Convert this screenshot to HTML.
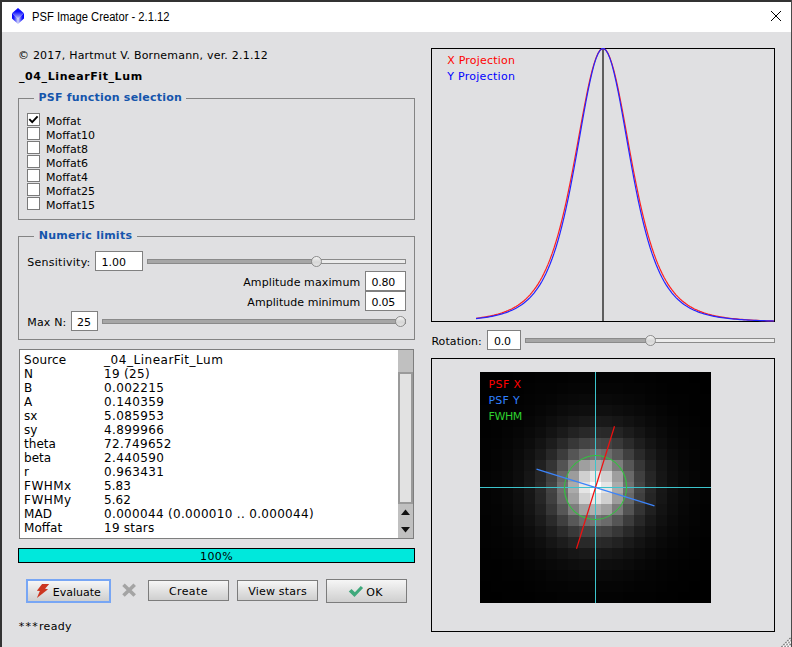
<!DOCTYPE html>
<html><head><meta charset="utf-8"><title>PSF Image Creator - 2.1.12</title>
<style>
html,body{margin:0;padding:0;}
body{width:792px;height:647px;overflow:hidden;background:#e0e0e2;position:relative;font-family:'DejaVu Sans','Liberation Sans',sans-serif;font-size:11px;color:#000;}
.b{position:absolute;display:block;}
.t{position:absolute;white-space:pre;}
</style></head><body>
<div class="b" style="left:0px;top:0px;width:792px;height:32px;background:#fff;"></div>
<div class="b" style="left:0px;top:0px;width:792px;height:2px;background:#333;"></div>
<div class="b" style="left:0px;top:0px;width:2px;height:647px;background:#333;"></div>
<div class="b" style="left:791px;top:0px;width:1px;height:647px;background:#4a4a4a;"></div>
<svg class="b" style="left:779px;top:635px" width="12" height="12" viewBox="0 0 12 12"><path d="M2.5,12 L12,2.5 M5.5,12 L12,5.5 M8.5,12 L12,8.5" stroke="#6a6a6a" stroke-width="1.3" stroke-dasharray="1.6 1.2" fill="none"/><path d="M4,12 L12,4 M7,12 L12,7 M10,12 L12,10" stroke="#fff" stroke-width="1.2" stroke-dasharray="1.6 1.2" fill="none"/></svg>
<svg class="b" style="left:10px;top:6px" width="16" height="20" viewBox="10 6 16 20">
<defs>
<linearGradient id="gt" x1="0" y1="0" x2="0" y2="1"><stop offset="0" stop-color="#0000ff"/><stop offset="0.35" stop-color="#1010ff"/><stop offset="1" stop-color="#b8bef8"/></linearGradient>
<linearGradient id="gl" x1="0" y1="0" x2="1" y2="0"><stop offset="0" stop-color="#0000ff"/><stop offset="0.3" stop-color="#1818ff"/><stop offset="1" stop-color="#d4d8f6"/></linearGradient>
<linearGradient id="gr" x1="1" y1="0" x2="0" y2="0"><stop offset="0" stop-color="#0000ff"/><stop offset="0.3" stop-color="#1818ff"/><stop offset="1" stop-color="#d4d8f6"/></linearGradient>
</defs>
<polygon points="18,8 24,13.3 18,18.6 12,13.3" fill="url(#gt)"/>
<polygon points="12,13.3 18,18.6 18,24 12,18.6" fill="url(#gl)"/>
<polygon points="24,13.3 18,18.6 18,24 24,18.6" fill="url(#gr)"/>
</svg>
<svg class="b" style="left:768px;top:8px" width="16" height="16" viewBox="768 8 16 16"><path d="M771,11 L781,21 M781,11 L771,21" stroke="#000" stroke-width="1.0" fill="none"/></svg>
<div class="b" style="left:18px;top:98px;width:397px;height:122px;border:1px solid #848484;box-sizing:border-box;"></div>
<div class="b" style="left:34px;top:92px;width:152px;height:12px;background:#e0e0e2;"></div>
<div class="b" style="left:18px;top:236px;width:397px;height:104px;border:1px solid #848484;box-sizing:border-box;"></div>
<div class="b" style="left:34px;top:230px;width:103px;height:12px;background:#e0e0e2;"></div>
<div class="b" style="left:27px;top:113px;width:13px;height:13px;border:1px solid #7a7a7a;background:#fff;box-sizing:border-box;"></div>
<div class="b" style="left:27px;top:127px;width:13px;height:13px;border:1px solid #7a7a7a;background:#fff;box-sizing:border-box;"></div>
<div class="b" style="left:27px;top:141px;width:13px;height:13px;border:1px solid #7a7a7a;background:#fff;box-sizing:border-box;"></div>
<div class="b" style="left:27px;top:155px;width:13px;height:13px;border:1px solid #7a7a7a;background:#fff;box-sizing:border-box;"></div>
<div class="b" style="left:27px;top:169px;width:13px;height:13px;border:1px solid #7a7a7a;background:#fff;box-sizing:border-box;"></div>
<div class="b" style="left:27px;top:183px;width:13px;height:13px;border:1px solid #7a7a7a;background:#fff;box-sizing:border-box;"></div>
<div class="b" style="left:27px;top:197px;width:13px;height:13px;border:1px solid #7a7a7a;background:#fff;box-sizing:border-box;"></div>
<svg class="b" style="left:27px;top:113px" width="13" height="13" viewBox="0 0 13 13"><path d="M2.3,6.2 L5.2,9.2 L10.6,3.4" stroke="#000" stroke-width="1.9" fill="none"/></svg>
<div class="b" style="left:95px;top:251px;width:48px;height:20px;border:1px solid #808080;background:#fff;box-sizing:border-box;"></div>
<div class="b" style="left:365px;top:271px;width:41px;height:20px;border:1px solid #808080;background:#fff;box-sizing:border-box;"></div>
<div class="b" style="left:365px;top:291px;width:41px;height:20px;border:1px solid #808080;background:#fff;box-sizing:border-box;"></div>
<div class="b" style="left:71px;top:311px;width:27px;height:20px;border:1px solid #808080;background:#fff;box-sizing:border-box;"></div>
<div class="b" style="left:487px;top:330px;width:34px;height:20px;border:1px solid #808080;background:#fff;box-sizing:border-box;"></div>
<div class="b" style="left:147px;top:259.0px;width:259px;height:5px;border:1px solid #8a8a8a;background:#ececec;box-sizing:border-box;"></div><div class="b" style="left:147px;top:259.0px;width:169.5px;height:5px;border:1px solid #8a8a8a;background:#a6a6a6;box-sizing:border-box;"></div><div class="b" style="left:311.0px;top:256.0px;width:11px;height:11px;border-radius:50%;border:1px solid #8c8c8c;box-sizing:border-box;background:linear-gradient(#f4f4f4,#d6d6d6 55%,#e4e4e4);"></div>
<div class="b" style="left:102px;top:319.0px;width:304px;height:5px;border:1px solid #8a8a8a;background:#ececec;box-sizing:border-box;"></div><div class="b" style="left:102px;top:319.0px;width:298.5px;height:5px;border:1px solid #8a8a8a;background:#a6a6a6;box-sizing:border-box;"></div><div class="b" style="left:395.0px;top:316.0px;width:11px;height:11px;border-radius:50%;border:1px solid #8c8c8c;box-sizing:border-box;background:linear-gradient(#f4f4f4,#d6d6d6 55%,#e4e4e4);"></div>
<div class="b" style="left:525px;top:338.0px;width:250px;height:5px;border:1px solid #8a8a8a;background:#ececec;box-sizing:border-box;"></div><div class="b" style="left:525px;top:338.0px;width:125.5px;height:5px;border:1px solid #8a8a8a;background:#a6a6a6;box-sizing:border-box;"></div><div class="b" style="left:645.0px;top:335.0px;width:11px;height:11px;border-radius:50%;border:1px solid #8c8c8c;box-sizing:border-box;background:linear-gradient(#f4f4f4,#d6d6d6 55%,#e4e4e4);"></div>
<div class="b" style="left:19px;top:349px;width:395px;height:190px;border:1px solid #7e7e7e;background:#fff;box-sizing:border-box;"></div>
<div class="b" style="left:398px;top:350px;width:15px;height:188px;background:#c0c0c0;"></div>
<div class="b" style="left:398px;top:372px;width:15px;height:132px;border:2px solid #9a9a9a;background:#e2e2e2;box-sizing:border-box;"></div>
<svg class="b" style="left:398px;top:504px" width="15" height="34" viewBox="0 0 15 34"><polygon points="3,11 7.5,5.5 12,11" fill="#111"/><polygon points="3,23 7.5,28.5 12,23" fill="#111"/></svg>
<div class="b" style="left:18px;top:548px;width:397px;height:15px;border:1px solid #000;background:#00e8dc;box-sizing:border-box;"></div>
<div class="b" style="left:26px;top:579px;width:85px;height:24px;border:2px solid #78a6f4;box-sizing:border-box;background:linear-gradient(#f6f6f6,#e4e4e4 45%,#cfcfcf);"></div>
<div class="b" style="left:148px;top:580px;width:81px;height:21px;border:1px solid #7c7c7c;box-sizing:border-box;background:linear-gradient(#f6f6f6,#e4e4e4 45%,#cfcfcf);"></div>
<div class="b" style="left:237px;top:580px;width:81px;height:21px;border:1px solid #7c7c7c;box-sizing:border-box;background:linear-gradient(#f6f6f6,#e4e4e4 45%,#cfcfcf);"></div>
<div class="b" style="left:326px;top:579px;width:81px;height:24px;border:1px solid #7c7c7c;box-sizing:border-box;background:linear-gradient(#f6f6f6,#e4e4e4 45%,#cfcfcf);"></div>
<svg class="b" style="left:35px;top:582px" width="17" height="18" viewBox="35 582 17 18"><polygon points="42.05,584 49.2,584 45.06,588.85 48.07,589.25 36.9,598.1 39.84,591.05 36.9,590.8" fill="#cc3620"/></svg>
<svg class="b" style="left:120px;top:582px" width="18" height="18" viewBox="120 582 18 18"><path d="M123.5,584.7 L134.7,595.5 M134.7,584.7 L123.5,595.5" stroke="#a4a4a4" stroke-width="3.6" fill="none"/></svg>
<svg class="b" style="left:347px;top:583px" width="18" height="16" viewBox="347 583 18 16"><polygon points="348.8,591.4 351.5,588.9 354.9,592.2 360.8,585.9 363.1,588.1 354.5,596.9" fill="#3fa97c"/></svg>
<svg class="b" style="left:431px;top:48px" width="345" height="274" viewBox="431 48 345 274">
<rect x="431.5" y="48.5" width="343" height="273" fill="none" stroke="#000" stroke-width="1"/>
<path d="M603,49 V321" stroke="#5e5e5e" stroke-width="2" fill="none"/>
<path d="M476.0,318.27 L478.0,318.02 L480.0,317.75 L482.0,317.46 L484.0,317.14 L486.0,316.80 L488.0,316.43 L490.0,316.03 L492.0,315.60 L494.0,315.14 L496.0,314.63 L498.0,314.09 L500.0,313.49 L502.0,312.85 L504.0,312.15 L506.0,311.39 L508.0,310.57 L510.0,309.67 L512.0,308.69 L514.0,307.63 L516.0,306.47 L518.0,305.20 L520.0,303.83 L522.0,302.32 L524.0,300.68 L526.0,298.89 L528.0,296.93 L530.0,294.80 L532.0,292.47 L534.0,289.92 L536.0,287.14 L538.0,284.11 L540.0,280.81 L542.0,277.21 L544.0,273.28 L546.0,269.02 L548.0,264.38 L550.0,259.35 L552.0,253.90 L554.0,248.01 L556.0,241.66 L558.0,234.83 L560.0,227.50 L562.0,219.67 L564.0,211.34 L566.0,202.51 L568.0,193.20 L570.0,183.44 L572.0,173.27 L574.0,162.76 L576.0,151.99 L578.0,141.03 L580.0,130.02 L582.0,119.08 L584.0,108.35 L586.0,98.00 L588.0,88.20 L590.0,79.12 L592.0,70.94 L594.0,63.82 L596.0,57.91 L598.0,53.36 L600.0,50.26 L602.0,48.70 L604.0,48.70 L606.0,50.26 L608.0,53.36 L610.0,57.91 L612.0,63.82 L614.0,70.94 L616.0,79.12 L618.0,88.20 L620.0,98.00 L622.0,108.35 L624.0,119.08 L626.0,130.02 L628.0,141.03 L630.0,151.99 L632.0,162.76 L634.0,173.27 L636.0,183.44 L638.0,193.20 L640.0,202.51 L642.0,211.34 L644.0,219.67 L646.0,227.50 L648.0,234.83 L650.0,241.66 L652.0,248.01 L654.0,253.90 L656.0,259.35 L658.0,264.38 L660.0,269.02 L662.0,273.28 L664.0,277.21 L666.0,280.81 L668.0,284.11 L670.0,287.14 L672.0,289.92 L674.0,292.47 L676.0,294.80 L678.0,296.93 L680.0,298.89 L682.0,300.68 L684.0,302.32 L686.0,303.83 L688.0,305.20 L690.0,306.47 L692.0,307.63 L694.0,308.69 L696.0,309.67 L698.0,310.57 L700.0,311.39 L702.0,312.15 L704.0,312.85 L706.0,313.49 L708.0,314.09 L710.0,314.63 L712.0,315.14 L714.0,315.60 L716.0,316.03 L718.0,316.43 L720.0,316.80 L722.0,317.14 L724.0,317.46 L726.0,317.75 L728.0,318.02 L730.0,318.27 L732.0,318.50 L734.0,318.72 L736.0,318.92 L738.0,319.11 L740.0,319.29 L742.0,319.45 L744.0,319.60 L746.0,319.75 L748.0,319.88 L750.0,320.00 L752.0,320.12 L754.0,320.23 L756.0,320.33 L758.0,320.42 L760.0,320.51 L762.0,320.60 L764.0,320.67 L766.0,320.75 L768.0,320.82 L770.0,320.88 L772.0,320.94 L774.0,321.00" stroke="#ff2020" stroke-width="1.2" fill="none"/>
<path d="M476.0,318.64 L478.0,318.42 L480.0,318.19 L482.0,317.93 L484.0,317.66 L486.0,317.36 L488.0,317.04 L490.0,316.69 L492.0,316.31 L494.0,315.90 L496.0,315.46 L498.0,314.97 L500.0,314.45 L502.0,313.88 L504.0,313.26 L506.0,312.58 L508.0,311.85 L510.0,311.05 L512.0,310.17 L514.0,309.22 L516.0,308.18 L518.0,307.04 L520.0,305.79 L522.0,304.43 L524.0,302.94 L526.0,301.30 L528.0,299.51 L530.0,297.56 L532.0,295.41 L534.0,293.06 L536.0,290.49 L538.0,287.67 L540.0,284.58 L542.0,281.21 L544.0,277.52 L546.0,273.48 L548.0,269.08 L550.0,264.28 L552.0,259.05 L554.0,253.38 L556.0,247.23 L558.0,240.58 L560.0,233.41 L562.0,225.70 L564.0,217.45 L566.0,208.66 L568.0,199.34 L570.0,189.51 L572.0,179.22 L574.0,168.51 L576.0,157.47 L578.0,146.19 L580.0,134.78 L582.0,123.38 L584.0,112.15 L586.0,101.26 L588.0,90.90 L590.0,81.26 L592.0,72.55 L594.0,64.94 L596.0,58.62 L598.0,53.73 L600.0,50.40 L602.0,48.71 L604.0,48.71 L606.0,50.40 L608.0,53.73 L610.0,58.62 L612.0,64.94 L614.0,72.55 L616.0,81.26 L618.0,90.90 L620.0,101.26 L622.0,112.15 L624.0,123.38 L626.0,134.78 L628.0,146.19 L630.0,157.47 L632.0,168.51 L634.0,179.22 L636.0,189.51 L638.0,199.34 L640.0,208.66 L642.0,217.45 L644.0,225.70 L646.0,233.41 L648.0,240.58 L650.0,247.23 L652.0,253.38 L654.0,259.05 L656.0,264.28 L658.0,269.08 L660.0,273.48 L662.0,277.52 L664.0,281.21 L666.0,284.58 L668.0,287.67 L670.0,290.49 L672.0,293.06 L674.0,295.41 L676.0,297.56 L678.0,299.51 L680.0,301.30 L682.0,302.94 L684.0,304.43 L686.0,305.79 L688.0,307.04 L690.0,308.18 L692.0,309.22 L694.0,310.17 L696.0,311.05 L698.0,311.85 L700.0,312.58 L702.0,313.26 L704.0,313.88 L706.0,314.45 L708.0,314.97 L710.0,315.46 L712.0,315.90 L714.0,316.31 L716.0,316.69 L718.0,317.04 L720.0,317.36 L722.0,317.66 L724.0,317.93 L726.0,318.19 L728.0,318.42 L730.0,318.64 L732.0,318.85 L734.0,319.04 L736.0,319.21 L738.0,319.37 L740.0,319.53 L742.0,319.67 L744.0,319.80 L746.0,319.92 L748.0,320.04 L750.0,320.14 L752.0,320.24 L754.0,320.34 L756.0,320.42 L758.0,320.51 L760.0,320.58 L762.0,320.65 L764.0,320.72 L766.0,320.78 L768.0,320.84 L770.0,320.90 L772.0,320.95 L774.0,321.00" stroke="#2424ff" stroke-width="1.2" fill="none"/>
</svg>
<svg class="b" style="left:431px;top:358px" width="345" height="274" viewBox="431 358 345 274">
<rect x="431.5" y="358.5" width="343" height="273" fill="none" stroke="#000" stroke-width="1"/>
<rect x="480" y="372" width="231" height="231" fill="#000"/>
<g shape-rendering="crispEdges"><rect x="513" y="372" width="11" height="11" fill="#010101"/><rect x="524" y="372" width="11" height="11" fill="#010101"/><rect x="535" y="372" width="11" height="11" fill="#020202"/><rect x="546" y="372" width="11" height="11" fill="#020202"/><rect x="557" y="372" width="11" height="11" fill="#020202"/><rect x="568" y="372" width="11" height="11" fill="#030303"/><rect x="579" y="372" width="11" height="11" fill="#030303"/><rect x="590" y="372" width="11" height="11" fill="#030303"/><rect x="601" y="372" width="11" height="11" fill="#030303"/><rect x="612" y="372" width="11" height="11" fill="#030303"/><rect x="623" y="372" width="11" height="11" fill="#030303"/><rect x="634" y="372" width="11" height="11" fill="#020202"/><rect x="645" y="372" width="11" height="11" fill="#020202"/><rect x="656" y="372" width="11" height="11" fill="#010101"/><rect x="667" y="372" width="11" height="11" fill="#010101"/><rect x="678" y="372" width="11" height="11" fill="#010101"/><rect x="502" y="383" width="11" height="11" fill="#010101"/><rect x="513" y="383" width="11" height="11" fill="#010101"/><rect x="524" y="383" width="11" height="11" fill="#020202"/><rect x="535" y="383" width="11" height="11" fill="#030303"/><rect x="546" y="383" width="11" height="11" fill="#030303"/><rect x="557" y="383" width="11" height="11" fill="#040404"/><rect x="568" y="383" width="11" height="11" fill="#050505"/><rect x="579" y="383" width="11" height="11" fill="#050505"/><rect x="590" y="383" width="11" height="11" fill="#050505"/><rect x="601" y="383" width="11" height="11" fill="#050505"/><rect x="612" y="383" width="11" height="11" fill="#050505"/><rect x="623" y="383" width="11" height="11" fill="#040404"/><rect x="634" y="383" width="11" height="11" fill="#040404"/><rect x="645" y="383" width="11" height="11" fill="#030303"/><rect x="656" y="383" width="11" height="11" fill="#020202"/><rect x="667" y="383" width="11" height="11" fill="#010101"/><rect x="678" y="383" width="11" height="11" fill="#010101"/><rect x="689" y="383" width="11" height="11" fill="#010101"/><rect x="491" y="394" width="11" height="11" fill="#010101"/><rect x="502" y="394" width="11" height="11" fill="#010101"/><rect x="513" y="394" width="11" height="11" fill="#020202"/><rect x="524" y="394" width="11" height="11" fill="#030303"/><rect x="535" y="394" width="11" height="11" fill="#040404"/><rect x="546" y="394" width="11" height="11" fill="#050505"/><rect x="557" y="394" width="11" height="11" fill="#070707"/><rect x="568" y="394" width="11" height="11" fill="#080808"/><rect x="579" y="394" width="11" height="11" fill="#090909"/><rect x="590" y="394" width="11" height="11" fill="#090909"/><rect x="601" y="394" width="11" height="11" fill="#090909"/><rect x="612" y="394" width="11" height="11" fill="#080808"/><rect x="623" y="394" width="11" height="11" fill="#070707"/><rect x="634" y="394" width="11" height="11" fill="#060606"/><rect x="645" y="394" width="11" height="11" fill="#040404"/><rect x="656" y="394" width="11" height="11" fill="#030303"/><rect x="667" y="394" width="11" height="11" fill="#020202"/><rect x="678" y="394" width="11" height="11" fill="#020202"/><rect x="689" y="394" width="11" height="11" fill="#010101"/><rect x="700" y="394" width="11" height="11" fill="#010101"/><rect x="480" y="405" width="11" height="11" fill="#010101"/><rect x="491" y="405" width="11" height="11" fill="#010101"/><rect x="502" y="405" width="11" height="11" fill="#020202"/><rect x="513" y="405" width="11" height="11" fill="#030303"/><rect x="524" y="405" width="11" height="11" fill="#040404"/><rect x="535" y="405" width="11" height="11" fill="#060606"/><rect x="546" y="405" width="11" height="11" fill="#080808"/><rect x="557" y="405" width="11" height="11" fill="#0b0b0b"/><rect x="568" y="405" width="11" height="11" fill="#0d0d0d"/><rect x="579" y="405" width="11" height="11" fill="#0e0e0e"/><rect x="590" y="405" width="11" height="11" fill="#0f0f0f"/><rect x="601" y="405" width="11" height="11" fill="#0f0f0f"/><rect x="612" y="405" width="11" height="11" fill="#0d0d0d"/><rect x="623" y="405" width="11" height="11" fill="#0b0b0b"/><rect x="634" y="405" width="11" height="11" fill="#090909"/><rect x="645" y="405" width="11" height="11" fill="#070707"/><rect x="656" y="405" width="11" height="11" fill="#050505"/><rect x="667" y="405" width="11" height="11" fill="#030303"/><rect x="678" y="405" width="11" height="11" fill="#020202"/><rect x="689" y="405" width="11" height="11" fill="#010101"/><rect x="700" y="405" width="11" height="11" fill="#010101"/><rect x="480" y="416" width="11" height="11" fill="#010101"/><rect x="491" y="416" width="11" height="11" fill="#020202"/><rect x="502" y="416" width="11" height="11" fill="#030303"/><rect x="513" y="416" width="11" height="11" fill="#040404"/><rect x="524" y="416" width="11" height="11" fill="#060606"/><rect x="535" y="416" width="11" height="11" fill="#090909"/><rect x="546" y="416" width="11" height="11" fill="#0d0d0d"/><rect x="557" y="416" width="11" height="11" fill="#111111"/><rect x="568" y="416" width="11" height="11" fill="#151515"/><rect x="579" y="416" width="11" height="11" fill="#181818"/><rect x="590" y="416" width="11" height="11" fill="#1a1a1a"/><rect x="601" y="416" width="11" height="11" fill="#191919"/><rect x="612" y="416" width="11" height="11" fill="#161616"/><rect x="623" y="416" width="11" height="11" fill="#121212"/><rect x="634" y="416" width="11" height="11" fill="#0e0e0e"/><rect x="645" y="416" width="11" height="11" fill="#0a0a0a"/><rect x="656" y="416" width="11" height="11" fill="#070707"/><rect x="667" y="416" width="11" height="11" fill="#050505"/><rect x="678" y="416" width="11" height="11" fill="#030303"/><rect x="689" y="416" width="11" height="11" fill="#020202"/><rect x="700" y="416" width="11" height="11" fill="#010101"/><rect x="480" y="427" width="11" height="11" fill="#010101"/><rect x="491" y="427" width="11" height="11" fill="#020202"/><rect x="502" y="427" width="11" height="11" fill="#040404"/><rect x="513" y="427" width="11" height="11" fill="#060606"/><rect x="524" y="427" width="11" height="11" fill="#090909"/><rect x="535" y="427" width="11" height="11" fill="#0d0d0d"/><rect x="546" y="427" width="11" height="11" fill="#131313"/><rect x="557" y="427" width="11" height="11" fill="#1a1a1a"/><rect x="568" y="427" width="11" height="11" fill="#222222"/><rect x="579" y="427" width="11" height="11" fill="#282828"/><rect x="590" y="427" width="11" height="11" fill="#2b2b2b"/><rect x="601" y="427" width="11" height="11" fill="#292929"/><rect x="612" y="427" width="11" height="11" fill="#242424"/><rect x="623" y="427" width="11" height="11" fill="#1c1c1c"/><rect x="634" y="427" width="11" height="11" fill="#151515"/><rect x="645" y="427" width="11" height="11" fill="#0e0e0e"/><rect x="656" y="427" width="11" height="11" fill="#0a0a0a"/><rect x="667" y="427" width="11" height="11" fill="#060606"/><rect x="678" y="427" width="11" height="11" fill="#040404"/><rect x="689" y="427" width="11" height="11" fill="#030303"/><rect x="700" y="427" width="11" height="11" fill="#020202"/><rect x="480" y="438" width="11" height="11" fill="#020202"/><rect x="491" y="438" width="11" height="11" fill="#030303"/><rect x="502" y="438" width="11" height="11" fill="#050505"/><rect x="513" y="438" width="11" height="11" fill="#080808"/><rect x="524" y="438" width="11" height="11" fill="#0c0c0c"/><rect x="535" y="438" width="11" height="11" fill="#131313"/><rect x="546" y="438" width="11" height="11" fill="#1c1c1c"/><rect x="557" y="438" width="11" height="11" fill="#292929"/><rect x="568" y="438" width="11" height="11" fill="#373737"/><rect x="579" y="438" width="11" height="11" fill="#434343"/><rect x="590" y="438" width="11" height="11" fill="#484848"/><rect x="601" y="438" width="11" height="11" fill="#444444"/><rect x="612" y="438" width="11" height="11" fill="#393939"/><rect x="623" y="438" width="11" height="11" fill="#2b2b2b"/><rect x="634" y="438" width="11" height="11" fill="#1e1e1e"/><rect x="645" y="438" width="11" height="11" fill="#141414"/><rect x="656" y="438" width="11" height="11" fill="#0d0d0d"/><rect x="667" y="438" width="11" height="11" fill="#080808"/><rect x="678" y="438" width="11" height="11" fill="#050505"/><rect x="689" y="438" width="11" height="11" fill="#030303"/><rect x="700" y="438" width="11" height="11" fill="#020202"/><rect x="480" y="449" width="11" height="11" fill="#020202"/><rect x="491" y="449" width="11" height="11" fill="#040404"/><rect x="502" y="449" width="11" height="11" fill="#060606"/><rect x="513" y="449" width="11" height="11" fill="#0a0a0a"/><rect x="524" y="449" width="11" height="11" fill="#101010"/><rect x="535" y="449" width="11" height="11" fill="#191919"/><rect x="546" y="449" width="11" height="11" fill="#282828"/><rect x="557" y="449" width="11" height="11" fill="#3c3c3c"/><rect x="568" y="449" width="11" height="11" fill="#555555"/><rect x="579" y="449" width="11" height="11" fill="#6b6b6b"/><rect x="590" y="449" width="11" height="11" fill="#757575"/><rect x="601" y="449" width="11" height="11" fill="#6d6d6d"/><rect x="612" y="449" width="11" height="11" fill="#585858"/><rect x="623" y="449" width="11" height="11" fill="#3f3f3f"/><rect x="634" y="449" width="11" height="11" fill="#2a2a2a"/><rect x="645" y="449" width="11" height="11" fill="#1b1b1b"/><rect x="656" y="449" width="11" height="11" fill="#111111"/><rect x="667" y="449" width="11" height="11" fill="#0a0a0a"/><rect x="678" y="449" width="11" height="11" fill="#060606"/><rect x="689" y="449" width="11" height="11" fill="#040404"/><rect x="700" y="449" width="11" height="11" fill="#020202"/><rect x="480" y="460" width="11" height="11" fill="#020202"/><rect x="491" y="460" width="11" height="11" fill="#040404"/><rect x="502" y="460" width="11" height="11" fill="#070707"/><rect x="513" y="460" width="11" height="11" fill="#0c0c0c"/><rect x="524" y="460" width="11" height="11" fill="#131313"/><rect x="535" y="460" width="11" height="11" fill="#202020"/><rect x="546" y="460" width="11" height="11" fill="#343434"/><rect x="557" y="460" width="11" height="11" fill="#535353"/><rect x="568" y="460" width="11" height="11" fill="#7a7a7a"/><rect x="579" y="460" width="11" height="11" fill="#9f9f9f"/><rect x="590" y="460" width="11" height="11" fill="#afafaf"/><rect x="601" y="460" width="11" height="11" fill="#a1a1a1"/><rect x="612" y="460" width="11" height="11" fill="#7d7d7d"/><rect x="623" y="460" width="11" height="11" fill="#565656"/><rect x="634" y="460" width="11" height="11" fill="#373737"/><rect x="645" y="460" width="11" height="11" fill="#212121"/><rect x="656" y="460" width="11" height="11" fill="#141414"/><rect x="667" y="460" width="11" height="11" fill="#0c0c0c"/><rect x="678" y="460" width="11" height="11" fill="#070707"/><rect x="689" y="460" width="11" height="11" fill="#040404"/><rect x="700" y="460" width="11" height="11" fill="#030303"/><rect x="480" y="471" width="11" height="11" fill="#030303"/><rect x="491" y="471" width="11" height="11" fill="#050505"/><rect x="502" y="471" width="11" height="11" fill="#080808"/><rect x="513" y="471" width="11" height="11" fill="#0d0d0d"/><rect x="524" y="471" width="11" height="11" fill="#161616"/><rect x="535" y="471" width="11" height="11" fill="#252525"/><rect x="546" y="471" width="11" height="11" fill="#3f3f3f"/><rect x="557" y="471" width="11" height="11" fill="#676767"/><rect x="568" y="471" width="11" height="11" fill="#9c9c9c"/><rect x="579" y="471" width="11" height="11" fill="#d0d0d0"/><rect x="590" y="471" width="11" height="11" fill="#e7e7e7"/><rect x="601" y="471" width="11" height="11" fill="#d1d1d1"/><rect x="612" y="471" width="11" height="11" fill="#9e9e9e"/><rect x="623" y="471" width="11" height="11" fill="#696969"/><rect x="634" y="471" width="11" height="11" fill="#404040"/><rect x="645" y="471" width="11" height="11" fill="#262626"/><rect x="656" y="471" width="11" height="11" fill="#161616"/><rect x="667" y="471" width="11" height="11" fill="#0d0d0d"/><rect x="678" y="471" width="11" height="11" fill="#080808"/><rect x="689" y="471" width="11" height="11" fill="#050505"/><rect x="700" y="471" width="11" height="11" fill="#030303"/><rect x="480" y="482" width="11" height="11" fill="#030303"/><rect x="491" y="482" width="11" height="11" fill="#050505"/><rect x="502" y="482" width="11" height="11" fill="#080808"/><rect x="513" y="482" width="11" height="11" fill="#0e0e0e"/><rect x="524" y="482" width="11" height="11" fill="#171717"/><rect x="535" y="482" width="11" height="11" fill="#282828"/><rect x="546" y="482" width="11" height="11" fill="#444444"/><rect x="557" y="482" width="11" height="11" fill="#707070"/><rect x="568" y="482" width="11" height="11" fill="#ababab"/><rect x="579" y="482" width="11" height="11" fill="#e5e5e5"/><rect x="590" y="482" width="11" height="11" fill="#ffffff"/><rect x="601" y="482" width="11" height="11" fill="#e5e5e5"/><rect x="612" y="482" width="11" height="11" fill="#ababab"/><rect x="623" y="482" width="11" height="11" fill="#707070"/><rect x="634" y="482" width="11" height="11" fill="#444444"/><rect x="645" y="482" width="11" height="11" fill="#282828"/><rect x="656" y="482" width="11" height="11" fill="#171717"/><rect x="667" y="482" width="11" height="11" fill="#0e0e0e"/><rect x="678" y="482" width="11" height="11" fill="#080808"/><rect x="689" y="482" width="11" height="11" fill="#050505"/><rect x="700" y="482" width="11" height="11" fill="#030303"/><rect x="480" y="493" width="11" height="11" fill="#030303"/><rect x="491" y="493" width="11" height="11" fill="#050505"/><rect x="502" y="493" width="11" height="11" fill="#080808"/><rect x="513" y="493" width="11" height="11" fill="#0d0d0d"/><rect x="524" y="493" width="11" height="11" fill="#161616"/><rect x="535" y="493" width="11" height="11" fill="#262626"/><rect x="546" y="493" width="11" height="11" fill="#404040"/><rect x="557" y="493" width="11" height="11" fill="#696969"/><rect x="568" y="493" width="11" height="11" fill="#9e9e9e"/><rect x="579" y="493" width="11" height="11" fill="#d1d1d1"/><rect x="590" y="493" width="11" height="11" fill="#e7e7e7"/><rect x="601" y="493" width="11" height="11" fill="#d0d0d0"/><rect x="612" y="493" width="11" height="11" fill="#9c9c9c"/><rect x="623" y="493" width="11" height="11" fill="#676767"/><rect x="634" y="493" width="11" height="11" fill="#3f3f3f"/><rect x="645" y="493" width="11" height="11" fill="#252525"/><rect x="656" y="493" width="11" height="11" fill="#161616"/><rect x="667" y="493" width="11" height="11" fill="#0d0d0d"/><rect x="678" y="493" width="11" height="11" fill="#080808"/><rect x="689" y="493" width="11" height="11" fill="#050505"/><rect x="700" y="493" width="11" height="11" fill="#030303"/><rect x="480" y="504" width="11" height="11" fill="#030303"/><rect x="491" y="504" width="11" height="11" fill="#040404"/><rect x="502" y="504" width="11" height="11" fill="#070707"/><rect x="513" y="504" width="11" height="11" fill="#0c0c0c"/><rect x="524" y="504" width="11" height="11" fill="#141414"/><rect x="535" y="504" width="11" height="11" fill="#212121"/><rect x="546" y="504" width="11" height="11" fill="#373737"/><rect x="557" y="504" width="11" height="11" fill="#565656"/><rect x="568" y="504" width="11" height="11" fill="#7d7d7d"/><rect x="579" y="504" width="11" height="11" fill="#a1a1a1"/><rect x="590" y="504" width="11" height="11" fill="#afafaf"/><rect x="601" y="504" width="11" height="11" fill="#9f9f9f"/><rect x="612" y="504" width="11" height="11" fill="#7a7a7a"/><rect x="623" y="504" width="11" height="11" fill="#535353"/><rect x="634" y="504" width="11" height="11" fill="#343434"/><rect x="645" y="504" width="11" height="11" fill="#202020"/><rect x="656" y="504" width="11" height="11" fill="#131313"/><rect x="667" y="504" width="11" height="11" fill="#0c0c0c"/><rect x="678" y="504" width="11" height="11" fill="#070707"/><rect x="689" y="504" width="11" height="11" fill="#040404"/><rect x="700" y="504" width="11" height="11" fill="#020202"/><rect x="480" y="515" width="11" height="11" fill="#020202"/><rect x="491" y="515" width="11" height="11" fill="#040404"/><rect x="502" y="515" width="11" height="11" fill="#060606"/><rect x="513" y="515" width="11" height="11" fill="#0a0a0a"/><rect x="524" y="515" width="11" height="11" fill="#111111"/><rect x="535" y="515" width="11" height="11" fill="#1b1b1b"/><rect x="546" y="515" width="11" height="11" fill="#2a2a2a"/><rect x="557" y="515" width="11" height="11" fill="#3f3f3f"/><rect x="568" y="515" width="11" height="11" fill="#585858"/><rect x="579" y="515" width="11" height="11" fill="#6d6d6d"/><rect x="590" y="515" width="11" height="11" fill="#757575"/><rect x="601" y="515" width="11" height="11" fill="#6b6b6b"/><rect x="612" y="515" width="11" height="11" fill="#555555"/><rect x="623" y="515" width="11" height="11" fill="#3c3c3c"/><rect x="634" y="515" width="11" height="11" fill="#282828"/><rect x="645" y="515" width="11" height="11" fill="#191919"/><rect x="656" y="515" width="11" height="11" fill="#101010"/><rect x="667" y="515" width="11" height="11" fill="#0a0a0a"/><rect x="678" y="515" width="11" height="11" fill="#060606"/><rect x="689" y="515" width="11" height="11" fill="#040404"/><rect x="700" y="515" width="11" height="11" fill="#020202"/><rect x="480" y="526" width="11" height="11" fill="#020202"/><rect x="491" y="526" width="11" height="11" fill="#030303"/><rect x="502" y="526" width="11" height="11" fill="#050505"/><rect x="513" y="526" width="11" height="11" fill="#080808"/><rect x="524" y="526" width="11" height="11" fill="#0d0d0d"/><rect x="535" y="526" width="11" height="11" fill="#141414"/><rect x="546" y="526" width="11" height="11" fill="#1e1e1e"/><rect x="557" y="526" width="11" height="11" fill="#2b2b2b"/><rect x="568" y="526" width="11" height="11" fill="#393939"/><rect x="579" y="526" width="11" height="11" fill="#444444"/><rect x="590" y="526" width="11" height="11" fill="#484848"/><rect x="601" y="526" width="11" height="11" fill="#434343"/><rect x="612" y="526" width="11" height="11" fill="#373737"/><rect x="623" y="526" width="11" height="11" fill="#292929"/><rect x="634" y="526" width="11" height="11" fill="#1c1c1c"/><rect x="645" y="526" width="11" height="11" fill="#131313"/><rect x="656" y="526" width="11" height="11" fill="#0c0c0c"/><rect x="667" y="526" width="11" height="11" fill="#080808"/><rect x="678" y="526" width="11" height="11" fill="#050505"/><rect x="689" y="526" width="11" height="11" fill="#030303"/><rect x="700" y="526" width="11" height="11" fill="#020202"/><rect x="480" y="537" width="11" height="11" fill="#020202"/><rect x="491" y="537" width="11" height="11" fill="#030303"/><rect x="502" y="537" width="11" height="11" fill="#040404"/><rect x="513" y="537" width="11" height="11" fill="#060606"/><rect x="524" y="537" width="11" height="11" fill="#0a0a0a"/><rect x="535" y="537" width="11" height="11" fill="#0e0e0e"/><rect x="546" y="537" width="11" height="11" fill="#151515"/><rect x="557" y="537" width="11" height="11" fill="#1c1c1c"/><rect x="568" y="537" width="11" height="11" fill="#242424"/><rect x="579" y="537" width="11" height="11" fill="#292929"/><rect x="590" y="537" width="11" height="11" fill="#2b2b2b"/><rect x="601" y="537" width="11" height="11" fill="#282828"/><rect x="612" y="537" width="11" height="11" fill="#222222"/><rect x="623" y="537" width="11" height="11" fill="#1a1a1a"/><rect x="634" y="537" width="11" height="11" fill="#131313"/><rect x="645" y="537" width="11" height="11" fill="#0d0d0d"/><rect x="656" y="537" width="11" height="11" fill="#090909"/><rect x="667" y="537" width="11" height="11" fill="#060606"/><rect x="678" y="537" width="11" height="11" fill="#040404"/><rect x="689" y="537" width="11" height="11" fill="#020202"/><rect x="700" y="537" width="11" height="11" fill="#010101"/><rect x="480" y="548" width="11" height="11" fill="#010101"/><rect x="491" y="548" width="11" height="11" fill="#020202"/><rect x="502" y="548" width="11" height="11" fill="#030303"/><rect x="513" y="548" width="11" height="11" fill="#050505"/><rect x="524" y="548" width="11" height="11" fill="#070707"/><rect x="535" y="548" width="11" height="11" fill="#0a0a0a"/><rect x="546" y="548" width="11" height="11" fill="#0e0e0e"/><rect x="557" y="548" width="11" height="11" fill="#121212"/><rect x="568" y="548" width="11" height="11" fill="#161616"/><rect x="579" y="548" width="11" height="11" fill="#191919"/><rect x="590" y="548" width="11" height="11" fill="#1a1a1a"/><rect x="601" y="548" width="11" height="11" fill="#181818"/><rect x="612" y="548" width="11" height="11" fill="#151515"/><rect x="623" y="548" width="11" height="11" fill="#111111"/><rect x="634" y="548" width="11" height="11" fill="#0d0d0d"/><rect x="645" y="548" width="11" height="11" fill="#090909"/><rect x="656" y="548" width="11" height="11" fill="#060606"/><rect x="667" y="548" width="11" height="11" fill="#040404"/><rect x="678" y="548" width="11" height="11" fill="#030303"/><rect x="689" y="548" width="11" height="11" fill="#020202"/><rect x="700" y="548" width="11" height="11" fill="#010101"/><rect x="480" y="559" width="11" height="11" fill="#010101"/><rect x="491" y="559" width="11" height="11" fill="#010101"/><rect x="502" y="559" width="11" height="11" fill="#020202"/><rect x="513" y="559" width="11" height="11" fill="#030303"/><rect x="524" y="559" width="11" height="11" fill="#050505"/><rect x="535" y="559" width="11" height="11" fill="#070707"/><rect x="546" y="559" width="11" height="11" fill="#090909"/><rect x="557" y="559" width="11" height="11" fill="#0b0b0b"/><rect x="568" y="559" width="11" height="11" fill="#0d0d0d"/><rect x="579" y="559" width="11" height="11" fill="#0f0f0f"/><rect x="590" y="559" width="11" height="11" fill="#0f0f0f"/><rect x="601" y="559" width="11" height="11" fill="#0e0e0e"/><rect x="612" y="559" width="11" height="11" fill="#0d0d0d"/><rect x="623" y="559" width="11" height="11" fill="#0b0b0b"/><rect x="634" y="559" width="11" height="11" fill="#080808"/><rect x="645" y="559" width="11" height="11" fill="#060606"/><rect x="656" y="559" width="11" height="11" fill="#040404"/><rect x="667" y="559" width="11" height="11" fill="#030303"/><rect x="678" y="559" width="11" height="11" fill="#020202"/><rect x="689" y="559" width="11" height="11" fill="#010101"/><rect x="700" y="559" width="11" height="11" fill="#010101"/><rect x="480" y="570" width="11" height="11" fill="#010101"/><rect x="491" y="570" width="11" height="11" fill="#010101"/><rect x="502" y="570" width="11" height="11" fill="#020202"/><rect x="513" y="570" width="11" height="11" fill="#020202"/><rect x="524" y="570" width="11" height="11" fill="#030303"/><rect x="535" y="570" width="11" height="11" fill="#040404"/><rect x="546" y="570" width="11" height="11" fill="#060606"/><rect x="557" y="570" width="11" height="11" fill="#070707"/><rect x="568" y="570" width="11" height="11" fill="#080808"/><rect x="579" y="570" width="11" height="11" fill="#090909"/><rect x="590" y="570" width="11" height="11" fill="#090909"/><rect x="601" y="570" width="11" height="11" fill="#090909"/><rect x="612" y="570" width="11" height="11" fill="#080808"/><rect x="623" y="570" width="11" height="11" fill="#070707"/><rect x="634" y="570" width="11" height="11" fill="#050505"/><rect x="645" y="570" width="11" height="11" fill="#040404"/><rect x="656" y="570" width="11" height="11" fill="#030303"/><rect x="667" y="570" width="11" height="11" fill="#020202"/><rect x="678" y="570" width="11" height="11" fill="#010101"/><rect x="689" y="570" width="11" height="11" fill="#010101"/><rect x="491" y="581" width="11" height="11" fill="#010101"/><rect x="502" y="581" width="11" height="11" fill="#010101"/><rect x="513" y="581" width="11" height="11" fill="#010101"/><rect x="524" y="581" width="11" height="11" fill="#020202"/><rect x="535" y="581" width="11" height="11" fill="#030303"/><rect x="546" y="581" width="11" height="11" fill="#040404"/><rect x="557" y="581" width="11" height="11" fill="#040404"/><rect x="568" y="581" width="11" height="11" fill="#050505"/><rect x="579" y="581" width="11" height="11" fill="#050505"/><rect x="590" y="581" width="11" height="11" fill="#050505"/><rect x="601" y="581" width="11" height="11" fill="#050505"/><rect x="612" y="581" width="11" height="11" fill="#050505"/><rect x="623" y="581" width="11" height="11" fill="#040404"/><rect x="634" y="581" width="11" height="11" fill="#030303"/><rect x="645" y="581" width="11" height="11" fill="#030303"/><rect x="656" y="581" width="11" height="11" fill="#020202"/><rect x="667" y="581" width="11" height="11" fill="#010101"/><rect x="678" y="581" width="11" height="11" fill="#010101"/><rect x="502" y="592" width="11" height="11" fill="#010101"/><rect x="513" y="592" width="11" height="11" fill="#010101"/><rect x="524" y="592" width="11" height="11" fill="#010101"/><rect x="535" y="592" width="11" height="11" fill="#020202"/><rect x="546" y="592" width="11" height="11" fill="#020202"/><rect x="557" y="592" width="11" height="11" fill="#030303"/><rect x="568" y="592" width="11" height="11" fill="#030303"/><rect x="579" y="592" width="11" height="11" fill="#030303"/><rect x="590" y="592" width="11" height="11" fill="#030303"/><rect x="601" y="592" width="11" height="11" fill="#030303"/><rect x="612" y="592" width="11" height="11" fill="#030303"/><rect x="623" y="592" width="11" height="11" fill="#020202"/><rect x="634" y="592" width="11" height="11" fill="#020202"/><rect x="645" y="592" width="11" height="11" fill="#020202"/><rect x="656" y="592" width="11" height="11" fill="#010101"/><rect x="667" y="592" width="11" height="11" fill="#010101"/></g>
<path d="M595.5,372 V603 M480,487.5 H711" stroke="#3cc4cc" stroke-width="1" fill="none"/>
<ellipse cx="595.5" cy="487.5" rx="32.06" ry="30.91" transform="rotate(-72.750 595.5 487.5)" fill="none" stroke="#34c040" stroke-width="1.05"/>
<path d="M614.5,426.3 L576.5,548.7" stroke="#f01010" stroke-width="1.25" fill="none"/>
<path d="M654.5,505.8 L536.5,469.2" stroke="#3c84fa" stroke-width="1.25" fill="none"/>
</svg>
<div class="t" style="left:31.50px;top:10.34px;font-size:12px;line-height:15px;font-family:'Liberation Sans','DejaVu Sans',sans-serif;transform:scaleX(0.9328);transform-origin:0 0;">PSF Image Creator - 2.1.12</div>
<div class="t" style="left:18.00px;top:49.19px;font-size:11px;line-height:14px;letter-spacing:0.209px;">© 2017, Hartmut V. Bornemann, ver. 2.1.12</div>
<div class="t" style="left:19.00px;top:70.19px;font-size:11px;line-height:14px;font-weight:bold;letter-spacing:0.595px;">_04_LinearFit_Lum</div>
<div class="t" style="left:38.50px;top:91.19px;font-size:11px;line-height:14px;font-weight:bold;color:#1555ac;letter-spacing:0.217px;">PSF function selection</div>
<div class="t" style="left:46.10px;top:115.19px;font-size:11px;line-height:14px;">Moffat</div>
<div class="t" style="left:46.10px;top:129.19px;font-size:11px;line-height:14px;">Moffat10</div>
<div class="t" style="left:46.10px;top:143.19px;font-size:11px;line-height:14px;">Moffat8</div>
<div class="t" style="left:46.10px;top:157.19px;font-size:11px;line-height:14px;">Moffat6</div>
<div class="t" style="left:46.10px;top:171.19px;font-size:11px;line-height:14px;">Moffat4</div>
<div class="t" style="left:46.10px;top:185.19px;font-size:11px;line-height:14px;">Moffat25</div>
<div class="t" style="left:46.10px;top:199.19px;font-size:11px;line-height:14px;">Moffat15</div>
<div class="t" style="left:38.70px;top:229.19px;font-size:11px;line-height:14px;font-weight:bold;color:#1555ac;letter-spacing:0.243px;">Numeric limits</div>
<div class="t" style="left:27.30px;top:256.19px;font-size:11px;line-height:14px;letter-spacing:0.259px;">Sensitivity:</div>
<div class="t" style="left:101.50px;top:256.19px;font-size:11px;line-height:14px;">1.00</div>
<div class="t" style="left:243.20px;top:276.19px;font-size:11px;line-height:14px;letter-spacing:0.106px;">Amplitude maximum</div>
<div class="t" style="left:371.60px;top:276.19px;font-size:11px;line-height:14px;letter-spacing:-0.250px;">0.80</div>
<div class="t" style="left:247.30px;top:296.19px;font-size:11px;line-height:14px;letter-spacing:0.054px;">Amplitude minimum</div>
<div class="t" style="left:371.60px;top:296.19px;font-size:11px;line-height:14px;letter-spacing:-0.250px;">0.05</div>
<div class="t" style="left:27.30px;top:316.19px;font-size:11px;line-height:14px;letter-spacing:0.152px;">Max N:</div>
<div class="t" style="left:77.00px;top:316.19px;font-size:11px;line-height:14px;">25</div>
<div class="t" style="left:24.10px;top:353.35px;font-size:12px;line-height:15px;letter-spacing:0.170px;">Source</div>
<div class="t" style="left:104.10px;top:353.35px;font-size:12px;line-height:15px;letter-spacing:0.520px;">_04_LinearFit_Lum</div>
<div class="t" style="left:24.10px;top:367.35px;font-size:12px;line-height:15px;">N</div>
<div class="t" style="left:104.10px;top:367.35px;font-size:12px;line-height:15px;letter-spacing:0.310px;">19 (25)</div>
<div class="t" style="left:24.10px;top:381.35px;font-size:12px;line-height:15px;">B</div>
<div class="t" style="left:104.10px;top:381.35px;font-size:12px;line-height:15px;letter-spacing:0.360px;">0.002215</div>
<div class="t" style="left:24.10px;top:395.35px;font-size:12px;line-height:15px;">A</div>
<div class="t" style="left:104.10px;top:395.35px;font-size:12px;line-height:15px;letter-spacing:0.360px;">0.140359</div>
<div class="t" style="left:24.10px;top:409.35px;font-size:12px;line-height:15px;">sx</div>
<div class="t" style="left:104.10px;top:409.35px;font-size:12px;line-height:15px;letter-spacing:0.360px;">5.085953</div>
<div class="t" style="left:24.10px;top:423.35px;font-size:12px;line-height:15px;">sy</div>
<div class="t" style="left:104.10px;top:423.35px;font-size:12px;line-height:15px;letter-spacing:0.360px;">4.899966</div>
<div class="t" style="left:24.10px;top:437.35px;font-size:12px;line-height:15px;">theta</div>
<div class="t" style="left:104.10px;top:437.35px;font-size:12px;line-height:15px;letter-spacing:0.300px;">72.749652</div>
<div class="t" style="left:24.10px;top:451.35px;font-size:12px;line-height:15px;">beta</div>
<div class="t" style="left:104.10px;top:451.35px;font-size:12px;line-height:15px;letter-spacing:0.360px;">2.440590</div>
<div class="t" style="left:24.10px;top:465.35px;font-size:12px;line-height:15px;">r</div>
<div class="t" style="left:104.10px;top:465.35px;font-size:12px;line-height:15px;letter-spacing:0.360px;">0.963431</div>
<div class="t" style="left:24.10px;top:479.35px;font-size:12px;line-height:15px;letter-spacing:0.450px;">FWHMx</div>
<div class="t" style="left:104.10px;top:479.35px;font-size:12px;line-height:15px;">5.83</div>
<div class="t" style="left:24.10px;top:493.35px;font-size:12px;line-height:15px;letter-spacing:0.450px;">FWHMy</div>
<div class="t" style="left:104.10px;top:493.35px;font-size:12px;line-height:15px;">5.62</div>
<div class="t" style="left:24.10px;top:507.35px;font-size:12px;line-height:15px;">MAD</div>
<div class="t" style="left:104.10px;top:507.35px;font-size:12px;line-height:15px;letter-spacing:0.310px;">0.000044 (0.000010 .. 0.000044)</div>
<div class="t" style="left:24.10px;top:521.35px;font-size:12px;line-height:15px;">Moffat</div>
<div class="t" style="left:104.10px;top:521.35px;font-size:12px;line-height:15px;letter-spacing:0.220px;">19 stars</div>
<div class="t" style="left:200.00px;top:550.19px;font-size:11px;line-height:14px;letter-spacing:0.437px;">100%</div>
<div class="t" style="left:52.80px;top:586.19px;font-size:11px;line-height:14px;letter-spacing:-0.008px;">Evaluate</div>
<div class="t" style="left:169.00px;top:585.19px;font-size:11px;line-height:14px;letter-spacing:0.373px;">Create</div>
<div class="t" style="left:248.20px;top:585.19px;font-size:11px;line-height:14px;letter-spacing:0.216px;">View stars</div>
<div class="t" style="left:366.30px;top:586.19px;font-size:11px;line-height:14px;letter-spacing:0.412px;">OK</div>
<div class="t" style="left:18.70px;top:620.19px;font-size:11px;line-height:14px;"><span style="letter-spacing:1.233px">***</span><span style="letter-spacing:0.364px">ready</span></div>
<div class="t" style="left:447.20px;top:54.19px;font-size:11px;line-height:14px;color:#ff0000;letter-spacing:0.214px;">X Projection</div>
<div class="t" style="left:447.20px;top:70.19px;font-size:11px;line-height:14px;color:#0000ff;letter-spacing:0.283px;">Y Projection</div>
<div class="t" style="left:431.40px;top:335.19px;font-size:11px;line-height:14px;letter-spacing:0.076px;">Rotation:</div>
<div class="t" style="left:493.90px;top:335.19px;font-size:11px;line-height:14px;letter-spacing:-0.233px;">0.0</div>
<div class="t" style="left:488.40px;top:378.19px;font-size:11px;line-height:14px;color:#ff0000;letter-spacing:0.443px;">PSF X</div>
<div class="t" style="left:488.40px;top:394.19px;font-size:11px;line-height:14px;color:#3080ff;letter-spacing:0.286px;">PSF Y</div>
<div class="t" style="left:488.40px;top:410.19px;font-size:11px;line-height:14px;color:#2ed02e;letter-spacing:-0.342px;">FWHM</div>
</body></html>
